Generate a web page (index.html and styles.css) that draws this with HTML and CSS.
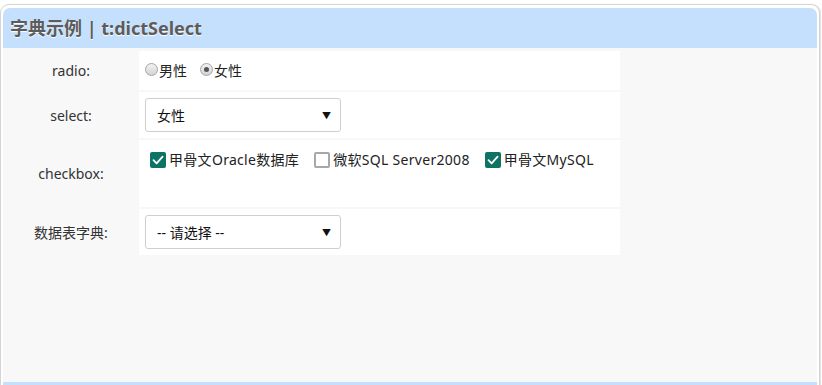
FILE: index.html
```html
<!DOCTYPE html>
<html>
<head>
<meta charset="utf-8">
<link rel="stylesheet" href="styles.css">
</head>
<body>
<div class="panel">
  <div class="panel-header">字典示例 | t:dictSelect</div>
  <div class="panel-body">
    <div class="form">
      <div class="label">radio:</div>
      <div class="value value-radio">
        <label class="radio"><span class="radio-dot"></span>男性</label>
        <label class="radio"><span class="radio-dot checked"></span>女性</label>
      </div>

      <div class="label">select:</div>
      <div class="value">
        <div class="select"><span>女性</span><span class="arrow">▼</span></div>
      </div>

      <div class="label">checkbox:</div>
      <div class="value value-check">
        <label class="check"><span class="box checked"><svg viewBox="0 0 16 16" width="16" height="16"><path d="M3.5 8.2 L6.6 11.3 L12.6 4.6" fill="none" stroke="#fff" stroke-width="1.8" stroke-linecap="round" stroke-linejoin="round"/></svg></span>甲骨文Oracle数据库</label>
        <label class="check"><span class="box"></span>微软SQL Server2008</label>
        <label class="check"><span class="box checked"><svg viewBox="0 0 16 16" width="16" height="16"><path d="M3.5 8.2 L6.6 11.3 L12.6 4.6" fill="none" stroke="#fff" stroke-width="1.8" stroke-linecap="round" stroke-linejoin="round"/></svg></span>甲骨文MySQL</label>
      </div>

      <div class="label">数据表字典:</div>
      <div class="value">
        <div class="select"><span>-- 请选择 --</span><span class="arrow">▼</span></div>
      </div>
    </div>
  </div>
  <div class="panel-footer"></div>
</div>
</body>
</html>
```

FILE: styles.css
```css
html, body {
  margin: 0;
  padding: 0;
  background: #ffffff;
  overflow: hidden;
}
body {
  font-family: "Noto Sans", "Noto Sans CJK SC", sans-serif;
  font-size: 14px;
  color: #222;
}
.panel {
  margin: 4px 2px 0 0;
  border: 1px solid #d4d4d4;
  border-bottom: none;
  border-radius: 9px 9px 0 0;
  padding: 3px 2px 0 2px;
  background: #fff;
  box-shadow: 1px 0 1px rgba(0,0,0,0.12);
}
.panel-header {
  height: 40px;
  line-height: 40px;
  background: #c4e0fc;
  border-radius: 7px 7px 0 0;
  padding-left: 7px;
  font-size: 18px;
  font-weight: bold;
  color: #5c5c5c;
  text-shadow: 0 1px 1px #fff;
}
.panel-body {
  background: #f8f8f8;
  height: 334px;
  padding-top: 3px;
  box-sizing: border-box;
}
.panel-footer {
  height: 6px;
  background: #c4e0fc;
}
.form {
  display: grid;
  grid-template-columns: 136px 481px;
  grid-template-rows: 39px 46px 67px 46px;
  row-gap: 2px;
}
.label {
  display: flex;
  align-items: center;
  justify-content: center;
  color: #333;
  font-size: 14px;
}
.value {
  background: #fff;
  display: flex;
  align-items: center;
  padding-left: 6px;
}
.value-radio {
  padding-bottom: 2px;
}
.radio {
  display: flex;
  align-items: center;
  margin-right: 13px;
}
.radio-dot {
  width: 11px;
  height: 11px;
  border: 1px solid #a4a4a4;
  border-radius: 50%;
  background: linear-gradient(#f2f2f2, #d4d4d4);
  display: flex;
  align-items: center;
  justify-content: center;
  margin-right: 1px;
}
.radio-dot.checked::after {
  content: "";
  width: 5px;
  height: 5px;
  border-radius: 50%;
  background: #555;
}
.select {
  width: 196px;
  height: 34px;
  box-sizing: border-box;
  border: 1px solid #cfcfcf;
  border-radius: 3px;
  display: flex;
  align-items: center;
  justify-content: space-between;
  padding: 0 9px 0 11px;
  color: #111;
  font-size: 14px;
}
.arrow {
  font-size: 9px;
  color: #111;
}
.value-check {
  align-items: flex-start;
  padding-left: 11px;
  padding-top: 10px;
}
.check {
  display: flex;
  align-items: center;
  margin-right: 15px;
  line-height: 20px;
  letter-spacing: 0.3px;
}
.box {
  width: 16px;
  height: 16px;
  box-sizing: border-box;
  border: 2px solid #a8a8a8;
  border-radius: 2px;
  background: #fff;
  margin-right: 3px;
  display: flex;
}
.box.checked {
  border: none;
  background: #0d7463;
}
```
